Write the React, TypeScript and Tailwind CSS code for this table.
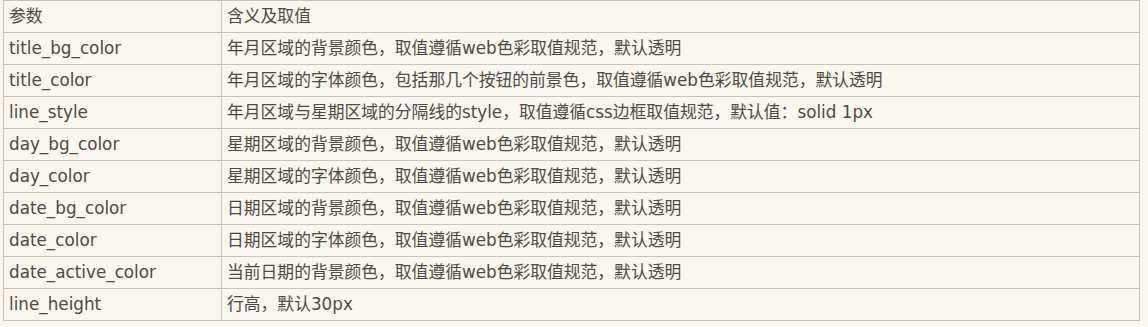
const ROWS: [string, string][] = [
  ["参数", "含义及取值"],
  ["title_bg_color", "年月区域的背景颜色，取值遵循web色彩取值规范，默认透明"],
  ["title_color", "年月区域的字体颜色，包括那几个按钮的前景色，取值遵循web色彩取值规范，默认透明"],
  ["line_style", "年月区域与星期区域的分隔线的style，取值遵循css边框取值规范，默认值：solid 1px"],
  ["day_bg_color", "星期区域的背景颜色，取值遵循web色彩取值规范，默认透明"],
  ["day_color", "星期区域的字体颜色，取值遵循web色彩取值规范，默认透明"],
  ["date_bg_color", "日期区域的背景颜色，取值遵循web色彩取值规范，默认透明"],
  ["date_color", "日期区域的字体颜色，取值遵循web色彩取值规范，默认透明"],
  ["date_active_color", "当前日期的背景颜色，取值遵循web色彩取值规范，默认透明"],
  ["line_height", "行高，默认30px"],
];

export default function App() {
  return (
    <div className="h-[327px] w-[1148px] bg-[#faf7f0] pl-[3px] font-['DejaVu_Sans','Noto_Sans_CJK_SC',sans-serif] text-[16.8px] text-[#4d4a45]">
      <table className="w-[1137px] border-collapse">
        <tbody>
          {ROWS.map(([param, desc]) => (
            <tr key={param} className="h-[32px]">
              <td className="w-[218px] border border-[#c6c2ba] px-[5px] align-middle leading-none">
                {param}
              </td>
              <td className="border border-[#c6c2ba] px-[5px] align-middle leading-none">{desc}</td>
            </tr>
          ))}
        </tbody>
      </table>
    </div>
  );
}
